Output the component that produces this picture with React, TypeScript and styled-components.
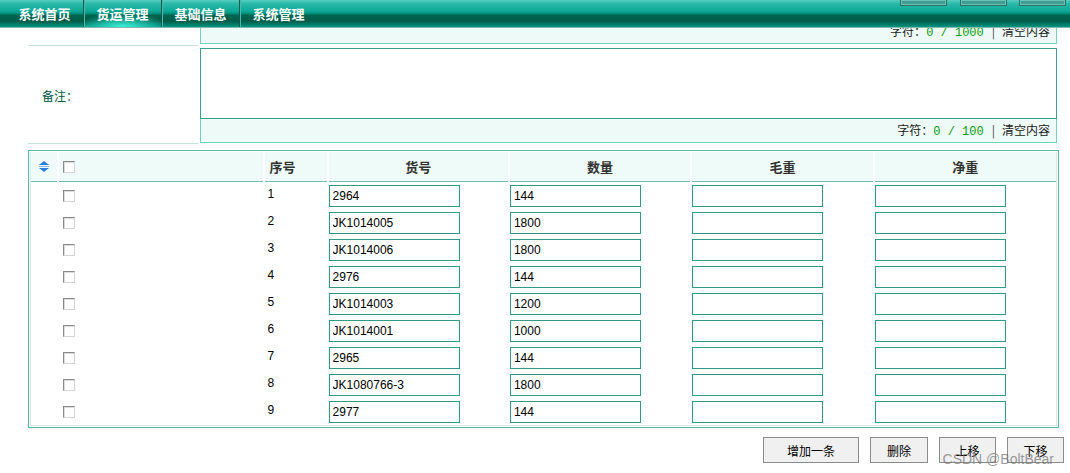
import styled, { createGlobalStyle, css } from "styled-components";

const GlobalStyle = createGlobalStyle`
  html, body {
    margin: 0;
    padding: 0;
    background: #ffffff;
  }
  body {
    font-family: "Liberation Sans", "Noto Sans CJK SC", sans-serif;
    font-size: 12px;
    color: #333333;
  }
`;

const menu = ["系统首页", "货运管理", "基础信息", "系统管理"];

const rows = [
  { no: "2964", qty: "144" },
  { no: "JK1014005", qty: "1800" },
  { no: "JK1014006", qty: "1800" },
  { no: "2976", qty: "144" },
  { no: "JK1014003", qty: "1200" },
  { no: "JK1014001", qty: "1000" },
  { no: "2965", qty: "144" },
  { no: "JK1080766-3", qty: "1800" },
  { no: "2977", qty: "144" },
];

const App = () => {
  return (
    <Page>
      <GlobalStyle />
      <TopBar>
        <Menu>
          {menu.map((m, i) => (
            <MenuItem key={m} $active={i === 1} $last={i === menu.length - 1}>
              {m}
            </MenuItem>
          ))}
        </Menu>
        <TopButtons>
          <TopButton />
          <TopButton />
          <TopButton />
        </TopButtons>
      </TopBar>

      <Form>
        <FormRow $height={18}>
          <Label />
          <Field>
            <Clip>
              <Counter $shift={-8}>
                字符：<Green>0 / 1000</Green><Bar>|</Bar>清空内容
              </Counter>
            </Clip>
          </Field>
        </FormRow>
        <FormRow $height={98}>
          <Label>备注：</Label>
          <Field>
            <TextBox />
            <Counter>
              字符：<Green>0 / 100</Green><Bar>|</Bar>清空内容
            </Counter>
          </Field>
        </FormRow>
      </Form>

      <Frame>
        <Inner>
          <Grid>
            <colgroup>
              <col style={{ width: 27 }} />
              <col style={{ width: 206 }} />
              <col style={{ width: 63 }} />
              <col style={{ width: 181 }} />
              <col style={{ width: 182 }} />
              <col style={{ width: 182 }} />
              <col style={{ width: 182 }} />
            </colgroup>
            <thead>
              <tr>
                <Th $align="center">
                  <SortIcon width="12" height="11" viewBox="0 0 12 11">
                    <path d="M6 0 L11 4 L1 4 Z" fill="#2b7fe0" />
                    <rect x="1" y="5" width="10" height="1" fill="#8fbff0" />
                    <path d="M1 7 L11 7 L6 11 Z" fill="#2b7fe0" />
                  </SortIcon>
                </Th>
                <Th $align="left">
                  <Check />
                </Th>
                <Th $align="left">序号</Th>
                <Th $align="center">货号</Th>
                <Th $align="center">数量</Th>
                <Th $align="center">毛重</Th>
                <Th $align="center">净重</Th>
              </tr>
            </thead>
            <tbody>
              {rows.map((r, i) => (
                <tr key={i}>
                  <Td />
                  <Td>
                    <Check />
                  </Td>
                  <IndexCell>{i + 1}</IndexCell>
                  <Td>
                    <Input defaultValue={r.no} />
                  </Td>
                  <Td>
                    <Input defaultValue={r.qty} />
                  </Td>
                  <Td>
                    <Input defaultValue="" />
                  </Td>
                  <Td>
                    <Input defaultValue="" />
                  </Td>
                </tr>
              ))}
            </tbody>
          </Grid>
        </Inner>
      </Frame>

      <Actions>
        <Button $width={96}>增加一条</Button>
        <Button $width={58}>删除</Button>
        <Button $width={57}>上移</Button>
        <Button $width={57}>下移</Button>
      </Actions>

      <Watermark>CSDN @BoltBear</Watermark>
    </Page>
  );
};

export default App;

const Page = styled.div`
  position: relative;
  width: 1070px;
  height: 473px;
  overflow: hidden;
`;

const TopBar = styled.div`
  display: flex;
  height: 27px;
  border-bottom: 1px solid #7fb8aa;
  background: linear-gradient(
    to bottom,
    #58cdbf 0%,
    #2ab8a8 14%,
    #0eaa98 40%,
    #03907c 50%,
    #006550 56%,
    #005c48 78%,
    #00806c 92%,
    #009a86 100%
  );
`;

const Menu = styled.div`
  display: flex;
  padding-left: 6px;
`;

const MenuItem = styled.div<{ $active?: boolean; $last?: boolean }>`
  width: 77px;
  text-align: center;
  line-height: 27px;
  font-family: "Noto Sans CJK SC", sans-serif;
  font-size: 13px;
  font-weight: bold;
  color: #ffffff;
  border-right: 1px solid #0a5a4c;
  box-shadow: 1px 0 0 #4fb8aa;
  ${(p) =>
    p.$active &&
    css`
      background: radial-gradient(
        ellipse 60% 50% at 50% 100%,
        rgba(60, 240, 215, 1) 0%,
        rgba(40, 215, 195, 0.6) 55%,
        rgba(0, 0, 0, 0) 100%
      );
    `}
  ${(p) =>
    p.$last &&
    css`
      border-right: none;
      box-shadow: none;
    `}
`;

const TopButtons = styled.div`
  display: flex;
  gap: 12px;
  margin-left: auto;
  padding-right: 4px;
  align-items: flex-start;
`;

const TopButton = styled.div`
  width: 45px;
  height: 5px;
  border: 1px solid #2a6e66;
  border-top: none;
  background: #3e9e92;
  box-shadow: inset 0 0 0 1px #6cc2b6;
  &:first-child {
    margin-right: 1px;
  }
`;

const Form = styled.div`
  padding-left: 28px;
  width: 1029px;
`;

const FormRow = styled.div<{ $height: number }>`
  display: grid;
  grid-template-columns: 170px 1fr;
  column-gap: 2px;
  height: ${(p) => p.$height}px;
`;

const Label = styled.div`
  display: flex;
  align-items: center;
  padding: 2px 0 0 14px;
  border-bottom: 1px solid #c4e2da;
  font-family: "Noto Sans CJK SC", sans-serif;
  font-size: 12px;
  color: #00574a;
`;

const Field = styled.div`
  display: flex;
  flex-direction: column;
`;

const Clip = styled.div`
  height: 16px;
  overflow: hidden;
`;

const TextBox = styled.div`
  margin-top: 2px;
  height: 69px;
  border: 1px solid #36a190;
`;

const Counter = styled.div<{ $shift?: number }>`
  margin-top: ${(p) => p.$shift ?? 0}px;
  height: 23px;
  line-height: 22px;
  padding-right: 6px;
  text-align: right;
  background: #edfaf7;
  border: 1px solid #72d2c2;
  border-top: none;
  font-family: "Noto Sans CJK SC", sans-serif;
  font-size: 12px;
  color: #222222;
  white-space: pre;
`;

const Green = styled.span`
  font-family: "Liberation Mono", monospace;
  font-size: 12px;
  color: #0a9a0a;
`;

const Bar = styled.span`
  color: #444;
  padding: 0 7px 0 8px;
`;

const Frame = styled.div`
  margin: 6px 0 0 28px;
  width: 1027px;
  border: 1px solid #5bb6a6;
  padding: 1px;
`;

const Inner = styled.div`
  border: 1px solid #d6ece6;
  border-top: none;
`;

const Grid = styled.table`
  width: 100%;
  table-layout: fixed;
  border-collapse: collapse;
`;

const Th = styled.th<{ $align: "left" | "center" }>`
  height: 29px;
  padding: 0 0 0 ${(p) => (p.$align === "left" ? "4px" : "0")};
  text-align: ${(p) => p.$align};
  background: #eefbf8;
  border-right: 2px solid #ffffff;
  border-bottom: 1px solid #6fc0b0;
  font-family: "Noto Sans CJK SC", sans-serif;
  font-size: 13px;
  font-weight: bold;
  color: #333333;
  vertical-align: middle;
  &:last-child {
    border-right: none;
  }
`;

const SortIcon = styled.svg`
  display: block;
  margin: 0 auto;
`;

const Td = styled.td`
  height: 27px;
  padding: 0 0 0 1px;
  vertical-align: middle;
  &:nth-child(2) {
    padding-left: 5px;
  }
`;

const IndexCell = styled.td`
  padding: 0 0 4px 3px;
  vertical-align: middle;
  font-family: "Liberation Sans", Arial, sans-serif;
  font-size: 12px;
  color: #000000;
`;

const Check = styled.span`
  display: block;
  width: 10px;
  height: 10px;
  background: #ffffff;
  border: 1px solid #8a8a8a;
  border-right-color: #d4d4d4;
  border-bottom-color: #d4d4d4;
  box-shadow: inset 1px 1px 0 #dcdcdc;
`;

const Input = styled.input`
  display: block;
  box-sizing: border-box;
  width: 131px;
  height: 22px;
  margin: 0;
  padding: 0 3px;
  border: 1px solid #2f9a88;
  outline: none;
  font-family: "Liberation Sans", Arial, sans-serif;
  font-size: 12px;
  color: #000000;
  background: #ffffff;
`;

const Actions = styled.div`
  display: flex;
  justify-content: flex-end;
  gap: 11px;
  margin-top: 9px;
  padding-right: 6px;
`;

const Button = styled.button<{ $width: number }>`
  width: ${(p) => p.$width}px;
  height: 26px;
  padding: 0;
  border: 1px solid #8c8c8c;
  background: #f0f0f0;
  font-family: "Noto Sans CJK SC", sans-serif;
  font-size: 12px;
  color: #000000;
`;

const Watermark = styled.div`
  position: absolute;
  right: 16px;
  bottom: 6px;
  font-family: "Liberation Sans", Arial, sans-serif;
  font-size: 14px;
  color: rgba(120, 120, 120, 0.75);
  pointer-events: none;
`;
